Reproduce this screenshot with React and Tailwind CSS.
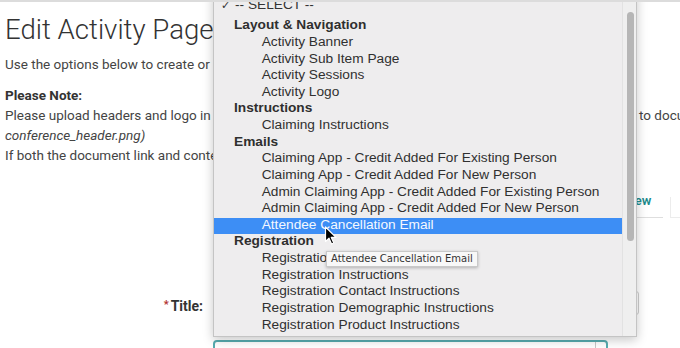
import React from "react";

const rows = [
  { t: "-- SELECT --", k: "sel" },
  { t: "Layout & Navigation", k: "g" },
  { t: "Activity Banner" },
  { t: "Activity Sub Item Page" },
  { t: "Activity Sessions" },
  { t: "Activity Logo" },
  { t: "Instructions", k: "g" },
  { t: "Claiming Instructions" },
  { t: "Emails", k: "g" },
  { t: "Claiming App - Credit Added For Existing Person" },
  { t: "Claiming App - Credit Added For New Person" },
  { t: "Admin Claiming App - Credit Added For Existing Person" },
  { t: "Admin Claiming App - Credit Added For New Person" },
  { t: "Attendee Cancellation Email", k: "hi" },
  { t: "Registration", k: "g" },
  { t: "Registration Confirmation" },
  { t: "Registration Instructions" },
  { t: "Registration Contact Instructions" },
  { t: "Registration Demographic Instructions" },
  { t: "Registration Product Instructions" },
];

function Row({ r }) {
  if (r.k === "sel") {
    return (
      <div className="relative h-[16.64px] leading-[6px] text-[#333] whitespace-nowrap">
        <span className="absolute left-[7px] text-[11px]">✓</span>
        <span className="pl-[21px]">{r.t}</span>
      </div>
    );
  }
  if (r.k === "g") {
    return (
      <div className="h-[16.64px] leading-[13px] pl-[20px] font-bold text-[#2f2f2f] whitespace-nowrap">
        {r.t}
      </div>
    );
  }
  if (r.k === "hi") {
    return (
      <div className="h-[16.64px] leading-[13px] pl-[47.7px] bg-[#3d8ef5] text-[#f4f8ff] whitespace-nowrap">
        {r.t}
      </div>
    );
  }
  return (
    <div className="h-[16.64px] leading-[13px] pl-[47.7px] text-[#303030] whitespace-nowrap">
      {r.t}
    </div>
  );
}

export default function App() {
  return (
    <div className="relative w-[680px] h-[348px] overflow-hidden bg-white font-['Roboto',sans-serif] text-[#444]">
      <div className="relative z-30 h-[2px] bg-[#dcdcdc]" />

      <div className="flex h-[216px]">
        <div className="w-[213px] shrink-0 overflow-hidden whitespace-nowrap pl-[5px]">
          <h1 className="mt-[12px] mb-[8px] text-[27.6px] leading-[32px] font-light text-[#333]">
            Edit Activity Page
          </h1>
          <p className="mb-[11px] text-[13.5px] leading-[20px]">
            Use the options below to create or edit the pages for this activity.
          </p>
          <div className="text-[13.5px] leading-[20px]">
            <div className="font-bold text-[#333]">Please Note:</div>
            <div>Please upload headers and logo in the Documents section and link them</div>
            <div className="italic">conference_header.png)</div>
            <div>If both the document link and content are provided, the link is used.</div>
          </div>
        </div>
        <div className="w-[410px] shrink-0" />
        <div className="flex-1 overflow-hidden whitespace-nowrap">
          <div className="pt-[103px] pl-[16px] text-[13.5px] leading-[20px]">to document</div>
          <div className="mt-[65.6px] flex items-end">
            <div className="w-[40px] border-b border-[#dedede] pb-[6px] text-[13px] leading-[20px] font-semibold text-[#1c8a8c]">
              View
            </div>
            <div className="w-[7px]" />
            <div className="h-[21px] flex-1 border-b border-l border-[#ececec]" />
          </div>
        </div>
      </div>

      <div className="mt-[73px] flex h-[24px] items-center">
        <div className="w-[203px] shrink-0 pt-[8px] text-right text-[14px] leading-[16px] font-bold text-[#333]">
          <span className="relative top-[-3px] mr-[2px] text-[11px] text-[#b03030]">*</span>
          Title:
        </div>
        <div className="ml-[10px] h-[24px] w-[426px] rounded-[3px] border border-[#cfcfcf]" />
      </div>

      <div className="ml-[213px] mt-[25px] flex h-[24px] w-[395px] rounded-[4px] border-2 border-[#57acb0]">
        <div className="flex-1" />
        <div className="w-[11px] border-l border-[#c8c8c8]" />
      </div>

      {/* native select popup */}
      <div className="absolute left-[213px] top-[-10px] z-10 flex h-[347px] w-[424px] border border-[#c4c4c4] bg-[#eeedee] shadow-[0_3px_10px_rgba(0,0,0,0.22)] font-['Liberation_Sans',Arial,sans-serif] text-[13.7px]">
        <div className="w-[408px] overflow-hidden pt-[10.66px]">
          {rows.map((r, i) => (
            <Row key={i} r={r} />
          ))}
        </div>
        <div className="flex-1 border-l border-[#e2e2e2] bg-[#efefef]">
          <div className="ml-[4px] mt-[20.7px] h-[229px] w-[7px] rounded-full bg-[#b6b6b6]" />
        </div>
      </div>

      {/* tooltip */}
      <div className="absolute left-[326px] top-[251px] z-20 h-[16px] border border-[#c9c9c9] bg-[#f8f8f8] px-[4px] font-['DejaVu_Sans',sans-serif] text-[10px] leading-[14px] text-[#333] shadow-[0_1px_3px_rgba(0,0,0,0.25)] whitespace-nowrap">
        Attendee Cancellation Email
      </div>

      {/* cursor */}
      <svg
        className="absolute left-[324px] top-[226px] z-20"
        width="14"
        height="20"
        viewBox="0 0 14 20"
      >
        <path
          d="M1.5 1 L1.5 15.5 L5 12.2 L7.6 18 L9.8 17 L7.3 11.4 L12 11.4 Z"
          fill="#000"
          stroke="#fff"
          strokeWidth="1.2"
          strokeLinejoin="round"
        />
      </svg>
    </div>
  );
}
